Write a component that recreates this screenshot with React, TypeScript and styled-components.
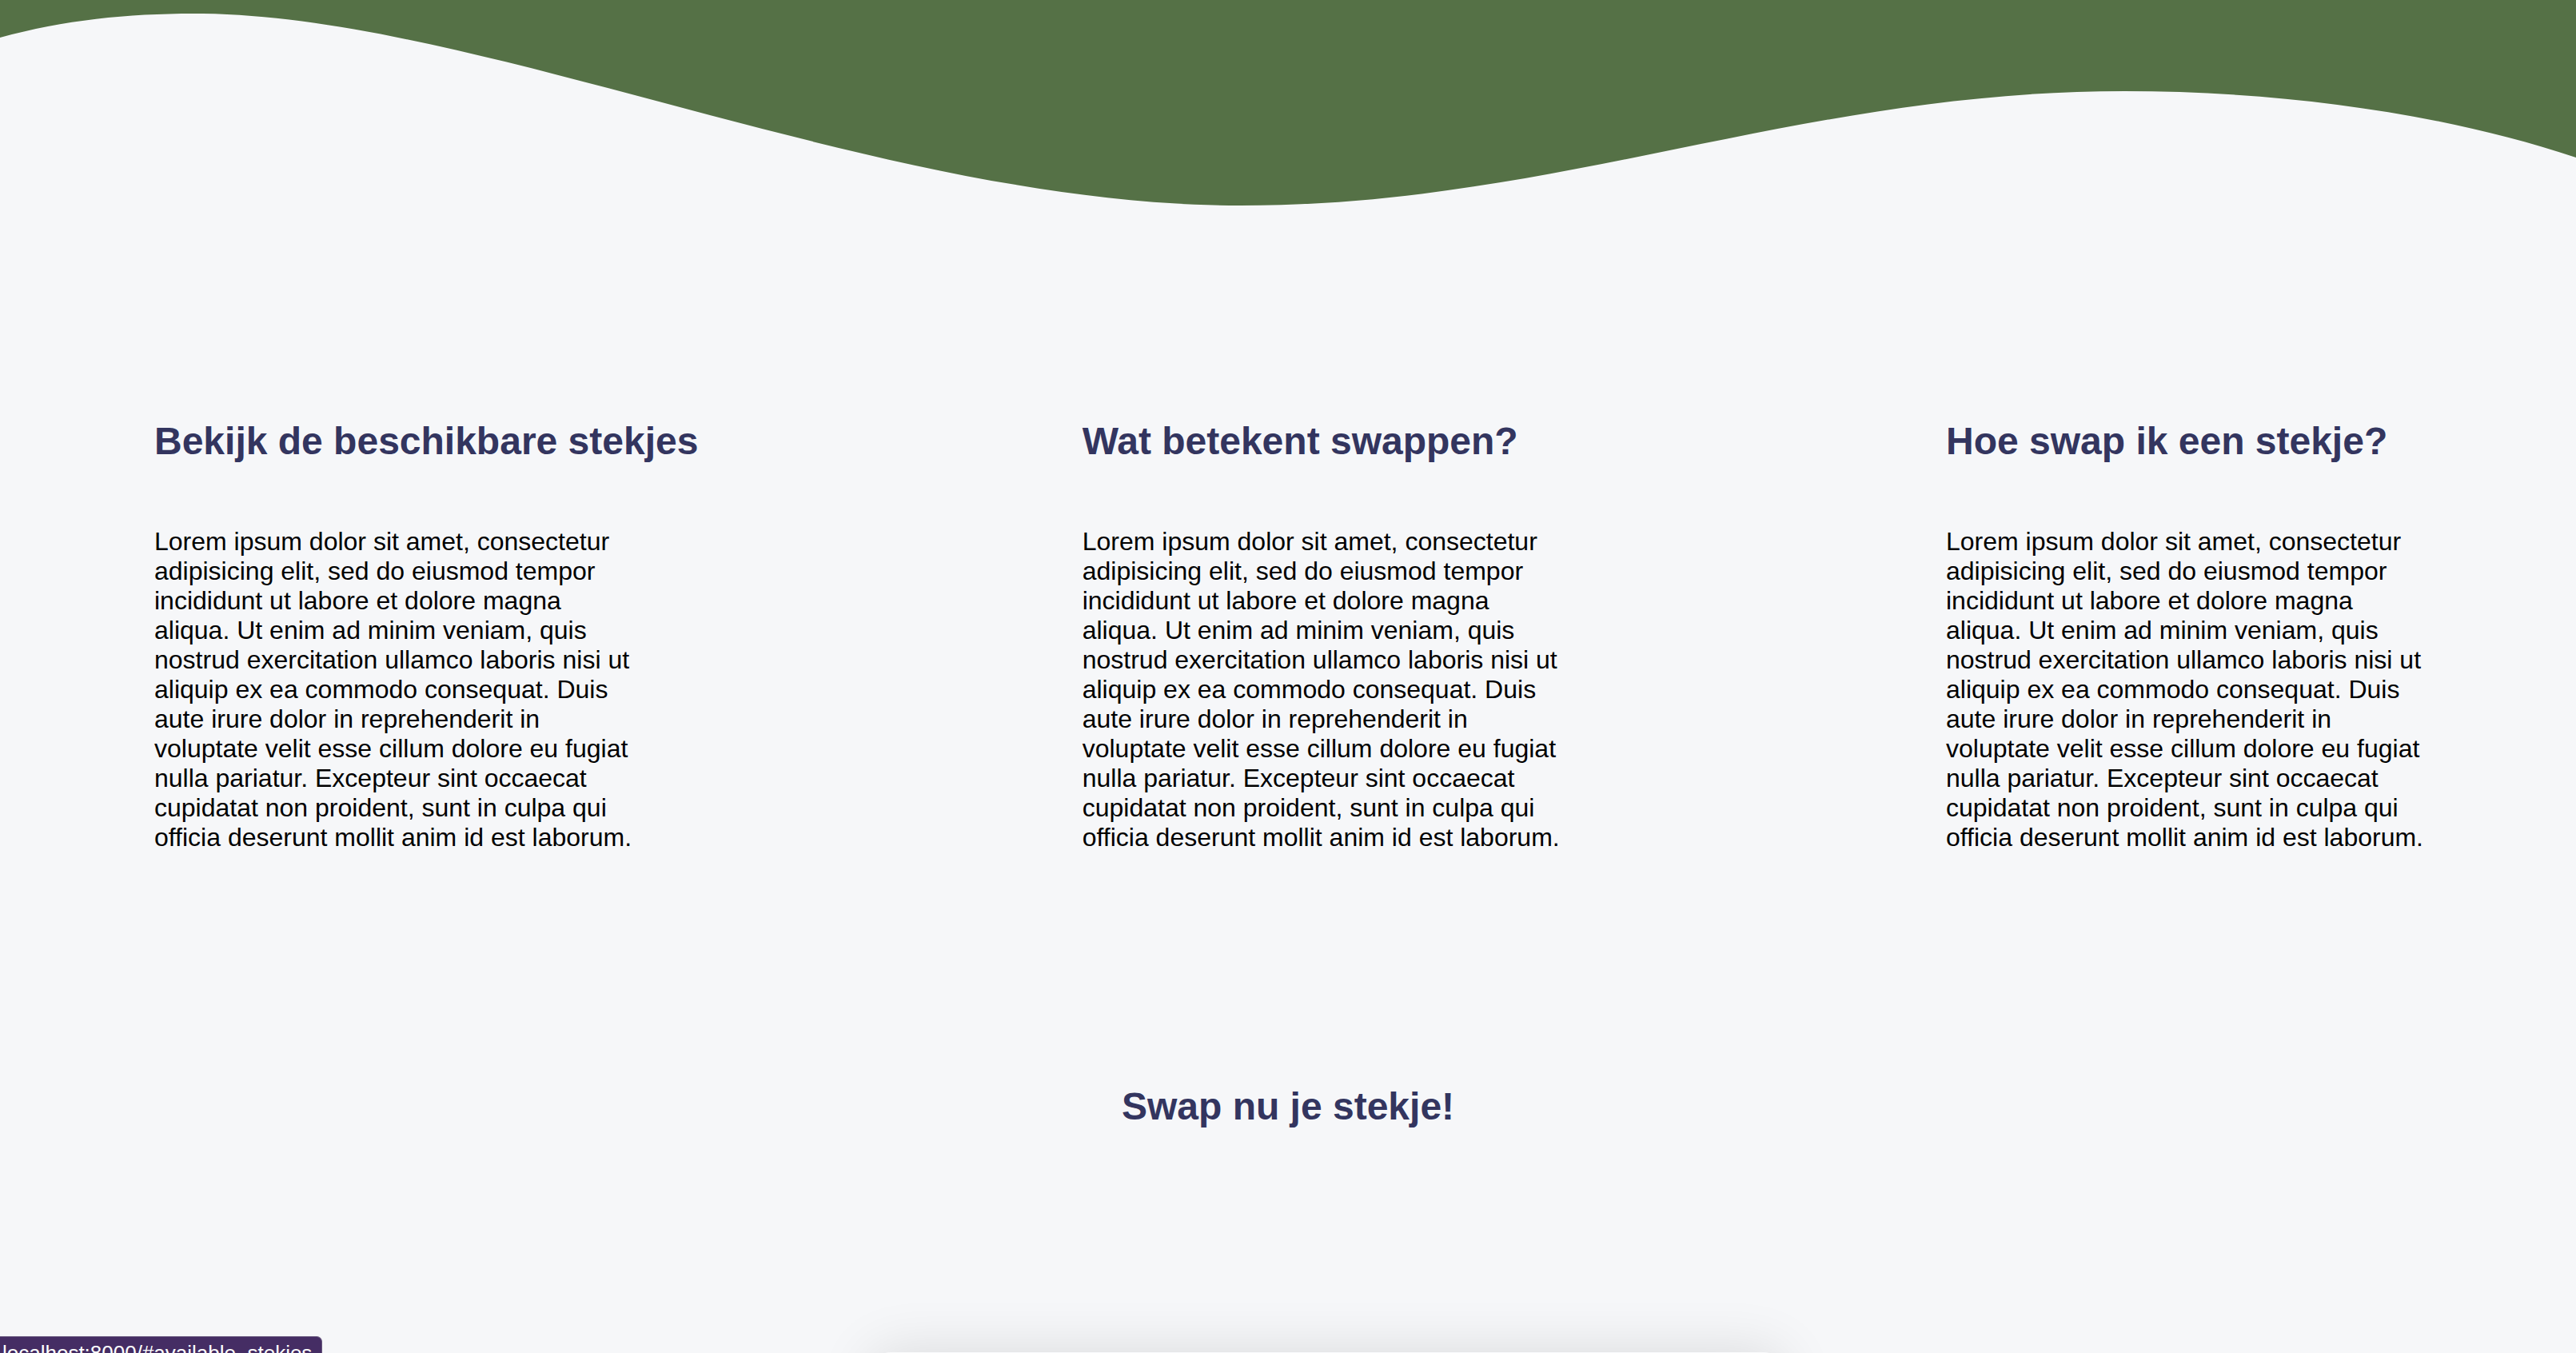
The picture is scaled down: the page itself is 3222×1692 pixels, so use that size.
import React from "react";
import styled, { createGlobalStyle } from "styled-components";

const GlobalStyle = createGlobalStyle`
  html, body {
    margin: 0;
    padding: 0;
    background: #f6f7f9;
    font-family: "Liberation Sans", Arial, Helvetica, sans-serif;
  }
`;

const Page = styled.div`
  position: relative;
  height: 100vh;
  overflow: hidden;
  background: #f6f7f9;
`;

const Wave = styled.svg`
  display: block;
  width: 100%;
  height: 260px;
`;

const Columns = styled.section`
  display: flex;
  justify-content: space-between;
  align-items: flex-start;
  padding: 264px 188px 0 193px;
`;

const Column = styled.article`
  display: flex;
  flex-direction: column;
`;

const Heading = styled.h2`
  margin: 0;
  font-size: 48px;
  font-weight: 700;
  line-height: normal;
  color: #33355f;
  white-space: nowrap;
`;

const Text = styled.p`
  margin: 80px 0 0;
  width: 600px;
  font-size: 32px;
  line-height: normal;
  color: #000;
`;

const CallToAction = styled.h2`
  margin: 290px 0 0;
  text-align: center;
  font-size: 48px;
  font-weight: 700;
  line-height: normal;
  color: #33355f;
`;

const Card = styled.div`
  margin: 280px 0 0 1090px;
  width: 1140px;
  height: 400px;
  border-radius: 24px;
  background: #fafbfc;
  box-shadow: 0 0 70px rgba(0, 0, 0, 0.12);
`;

const StatusBubble = styled.div`
  position: fixed;
  left: 0;
  bottom: 0;
  width: 403px;
  height: 21px;
  box-sizing: border-box;
  padding: 7px 0 0 3px;
  background: #452d64;
  border-top: 1px solid #6a5a80;
  border-right: 1px solid #6a5a80;
  border-top-right-radius: 7px;
  color: #ffffff;
  font-size: 26px;
  line-height: 1;
  white-space: nowrap;
  overflow: hidden;
`;

const lorem =
  "Lorem ipsum dolor sit amet, consectetur adipisicing elit, sed do eiusmod tempor incididunt ut labore et dolore magna aliqua. Ut enim ad minim veniam, quis nostrud exercitation ullamco laboris nisi ut aliquip ex ea commodo consequat. Duis aute irure dolor in reprehenderit in voluptate velit esse cillum dolore eu fugiat nulla pariatur. Excepteur sint occaecat cupidatat non proident, sunt in culpa qui officia deserunt mollit anim id est laborum.";

const columns = [
  "Bekijk de beschikbare stekjes",
  "Wat betekent swappen?",
  "Hoe swap ik een stekje?",
];

export default function App() {
  return (
    <>
      <GlobalStyle />
      <Page>
        <Wave viewBox="0 0 3222 260" preserveAspectRatio="none" aria-hidden="true">
          <path
            fill="#557146"
            d="M0,0 L3222,0 L3222,197 C3050,140 2850,114 2657,114 C2250,114 1950,257 1551,257 C1100,257 600,17 242,17 C160,17 80,25 0,47 Z"
          />
        </Wave>
        <Columns>
          {columns.map((title) => (
            <Column key={title}>
              <Heading>{title}</Heading>
              <Text>{lorem}</Text>
            </Column>
          ))}
        </Columns>
        <CallToAction>Swap nu je stekje!</CallToAction>
        <Card />
        <StatusBubble>localhost:8000/#available_stekjes</StatusBubble>
      </Page>
    </>
  );
}
